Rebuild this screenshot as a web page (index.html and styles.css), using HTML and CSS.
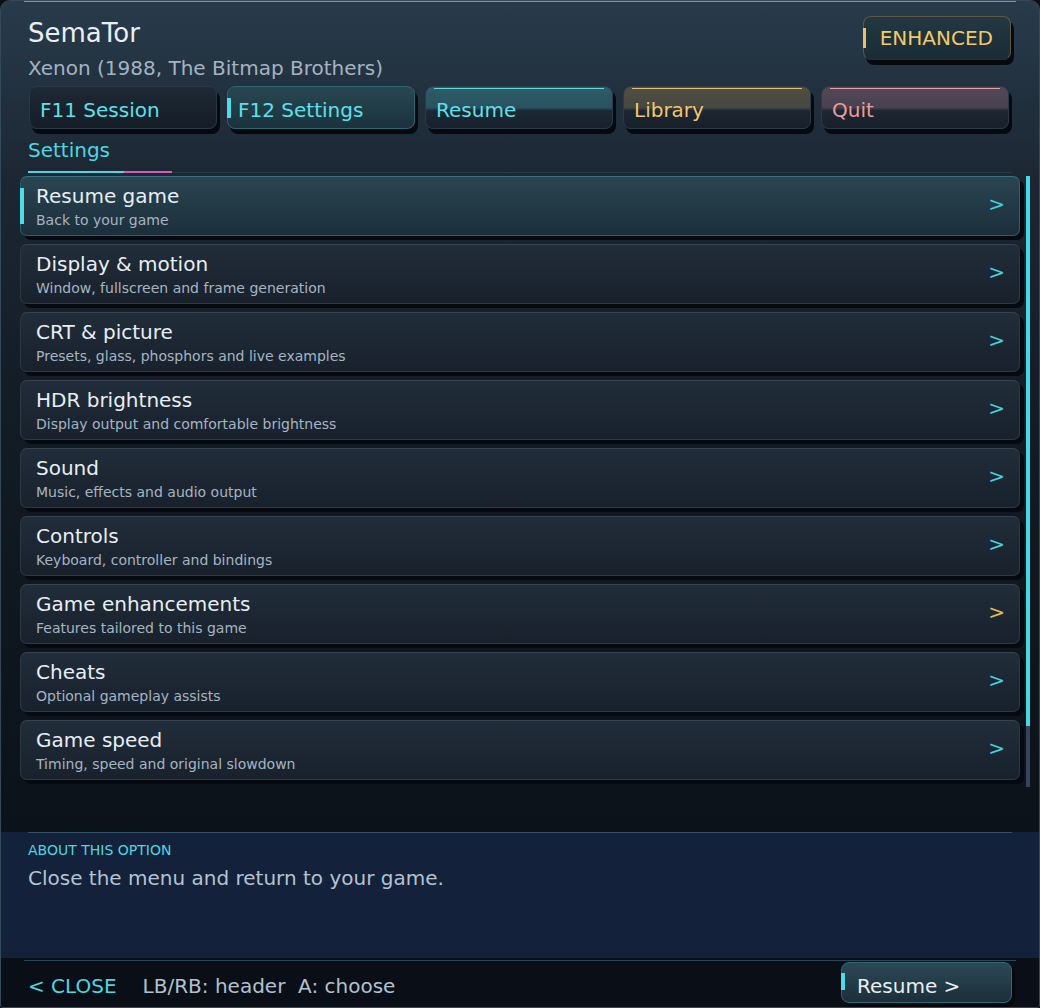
FILE: index.html
```html
<!DOCTYPE html>
<html>
<head>
<meta charset="UTF-8">
<link rel="stylesheet" href="styles.css">
</head>
<body>
<div class="window">
  <div class="top-line"></div>

  <header class="head">
    <div class="head-top">
      <div>
        <h1 class="title">SemaTor</h1>
        <div class="sub">Xenon (1988, The Bitmap Brothers)</div>
      </div>
      <div class="badge">ENHANCED</div>
    </div>

    <nav class="tabs">
      <div class="tab tab-plain">F11 Session</div>
      <div class="tab tab-active">F12 Settings</div>
      <div class="tab tab-resume">Resume</div>
      <div class="tab tab-library">Library</div>
      <div class="tab tab-quit">Quit</div>
    </nav>

    <div class="section">Settings</div>
    <div class="rule"><span class="rule-cyan"></span><span class="rule-pink"></span></div>
  </header>

  <div class="list-wrap">
    <ul class="list">
      <li class="item selected">
        <div class="item-text"><div class="item-title">Resume game</div><div class="item-sub">Back to your game</div></div>
        <span class="chev">&gt;</span>
      </li>
      <li class="item">
        <div class="item-text"><div class="item-title">Display &amp; motion</div><div class="item-sub">Window, fullscreen and frame generation</div></div>
        <span class="chev">&gt;</span>
      </li>
      <li class="item">
        <div class="item-text"><div class="item-title">CRT &amp; picture</div><div class="item-sub">Presets, glass, phosphors and live examples</div></div>
        <span class="chev">&gt;</span>
      </li>
      <li class="item">
        <div class="item-text"><div class="item-title">HDR brightness</div><div class="item-sub">Display output and comfortable brightness</div></div>
        <span class="chev">&gt;</span>
      </li>
      <li class="item">
        <div class="item-text"><div class="item-title">Sound</div><div class="item-sub">Music, effects and audio output</div></div>
        <span class="chev">&gt;</span>
      </li>
      <li class="item">
        <div class="item-text"><div class="item-title">Controls</div><div class="item-sub">Keyboard, controller and bindings</div></div>
        <span class="chev">&gt;</span>
      </li>
      <li class="item">
        <div class="item-text"><div class="item-title">Game enhancements</div><div class="item-sub">Features tailored to this game</div></div>
        <span class="chev chev-gold">&gt;</span>
      </li>
      <li class="item">
        <div class="item-text"><div class="item-title">Cheats</div><div class="item-sub">Optional gameplay assists</div></div>
        <span class="chev">&gt;</span>
      </li>
      <li class="item">
        <div class="item-text"><div class="item-title">Game speed</div><div class="item-sub">Timing, speed and original slowdown</div></div>
        <span class="chev">&gt;</span>
      </li>
    </ul>
    <div class="scroll"><div class="thumb"></div></div>
  </div>

  <section class="about">
    <div class="about-inner">
      <div class="about-label">ABOUT THIS OPTION</div>
      <div class="about-text">Close the menu and return to your game.</div>
    </div>
  </section>

  <footer class="foot">
    <div class="foot-inner">
      <div class="hints">
        <span class="close">&lt; CLOSE</span>
        <span class="keys">LB/RB: header  A: choose</span>
      </div>
      <div class="resume-btn">Resume &gt;</div>
    </div>
  </footer>
</div>
</body>
</html>
```

FILE: styles.css
```css
body {
  margin: 0;
  background: #0b1016;
  font-family: "DejaVu Sans", "Noto Sans", sans-serif;
}

/* Outer window */
.window {
  width: 1040px;
  height: 1008px;
  box-sizing: border-box;
  border: 1px solid #34495a;
  border-radius: 10px 10px 3px 3px;
  background: linear-gradient(180deg, #283b4b 0px, #1c2733 175px, #121a23 450px, #0c1219 830px);
  display: flex;
  flex-direction: column;
  overflow: hidden;
}

.top-line {
  height: 1px;
  margin: 0 23px;
  background: #5aa6b4;
  flex: none;
}

/* Header */
.head {
  padding: 14px 27px 0;
  flex: none;
}

.head-top {
  display: flex;
  justify-content: space-between;
  align-items: flex-start;
}

.title {
  margin: 2px 0 0;
  font-size: 26px;
  line-height: 30px;
  font-weight: normal;
  color: #e9eff4;
}

.sub {
  margin-top: 8px;
  font-size: 20px;
  line-height: 24px;
  color: #a4b3c1;
}

.badge {
  position: relative;
  margin-right: 1px;
  padding: 9px 17px 9px 16px;
  border: 1px solid #5f5840;
  border-bottom-color: #22323d;
  border-radius: 8px;
  background: linear-gradient(#233842, #1a2c36);
  box-shadow: 3px 5px 0 #060a0f;
  color: #f2c96b;
  font-size: 20px;
  line-height: 24px;
}

.badge::before {
  content: "";
  position: absolute;
  left: -1px;
  top: 11px;
  width: 3px;
  height: 20px;
  background: #f0c060;
}

/* Header tabs */
.tabs {
  display: flex;
  gap: 10px;
  margin: 6px 0 0 1px;
}

.tab {
  position: relative;
  width: 188px;
  height: 43px;
  box-sizing: border-box;
  padding: 11px 10px 0;
  border: 1px solid #2a3846;
  border-radius: 8px;
  box-shadow: 3px 5px 0 #060a0f;
  font-size: 20px;
  line-height: 24px;
  color: #5fe0e8;
}

.tab-plain {
  background: linear-gradient(#1e2935, #151d27);
}

.tab-active {
  border-color: #2e6670;
  background: linear-gradient(#284752, #1b323e);
}

.tab-active::before {
  content: "";
  position: absolute;
  left: -1px;
  top: 11px;
  width: 4px;
  height: 20px;
  background: #4fdce6;
}

.tab-resume,
.tab-library,
.tab-quit {
  border-color: #2c3a48;
}

.tab-resume::after,
.tab-library::after,
.tab-quit::after {
  content: "";
  position: absolute;
  top: 1px;
  left: 8px;
  right: 8px;
  height: 1px;
}

.tab-resume {
  background: linear-gradient(#2e5c68 0%, #295260 50%, #1c2935 58%, #17202b 100%);
}
.tab-resume::after { background: #5fd8e0; }

.tab-library {
  color: #f0c76a;
  background: linear-gradient(#504f44 0%, #464741 50%, #1d2632 58%, #171f2a 100%);
}
.tab-library::after { background: #e0c070; }

.tab-quit {
  color: #eb9d9a;
  background: linear-gradient(#534858 0%, #494150 50%, #1d2632 58%, #171f2a 100%);
}
.tab-quit::after { background: #e8a0a0; }

.section {
  margin-top: 9px;
  font-size: 20px;
  line-height: 24px;
  color: #4fd6e0;
}

.rule {
  display: flex;
  height: 2px;
  margin-top: 9px;
  background: linear-gradient(transparent 50%, #2a3b4c 50%);
}

.rule-cyan {
  width: 96px;
  background: #4fd6e0;
}

.rule-pink {
  width: 48px;
  background: #d45cb8;
}

/* Option list */
.list-wrap {
  display: flex;
  gap: 6px;
  height: 656px;
  box-sizing: border-box;
  margin-top: 3px;
  padding: 0 9px 0 19px;
  flex: none;
}

.list {
  list-style: none;
  margin: 0;
  padding: 0;
  width: 1000px;
  display: flex;
  flex-direction: column;
  gap: 8px;
}

.item {
  position: relative;
  height: 60px;
  box-sizing: border-box;
  display: flex;
  justify-content: space-between;
  align-items: flex-start;
  padding: 7px 14px 0 15px;
  border: 1px solid #2b3846;
  border-top-color: #36434f;
  border-radius: 7px;
  background: linear-gradient(#212d3a, #18212c);
  box-shadow: 4px 4px 0 #060a10;
}

.item.selected {
  border-color: #2b5e6a;
  border-top-color: #34737f;
  background: linear-gradient(#2a4551, #1b2f3b);
}

.item.selected::before {
  content: "";
  position: absolute;
  left: -1px;
  top: 11px;
  width: 4px;
  height: 36px;
  background: #4fdce6;
}

.item-title {
  font-size: 20px;
  line-height: 24px;
  color: #e7eef4;
}

.item-sub {
  margin-top: 3px;
  font-size: 14px;
  line-height: 18px;
  color: #a6b4c2;
}

.chev {
  margin-top: 8px;
  font-size: 20px;
  line-height: 24px;
  color: #43d0dc;
}

.chev-gold {
  color: #e6b955;
}

.scroll {
  width: 4px;
  height: 611px;
  background: #34455a;
  flex: none;
}

.thumb {
  height: 550px;
  background: #46d8e4;
}

/* Description panel */
.about {
  height: 126px;
  box-sizing: border-box;
  padding: 0 27px;
  background: #13213a;
  flex: none;
}

.about-inner {
  border-top: 1px solid #33506a;
  padding-top: 9px;
}

.about-label {
  font-size: 14px;
  line-height: 17px;
  color: #4fd6e0;
}

.about-text {
  margin-top: 7px;
  font-size: 20px;
  line-height: 24px;
  color: #b4c3d1;
}

/* Footer */
.foot {
  flex: 1;
  padding: 2px 23px 0;
  background: #0a0f17;
}

.foot-inner {
  display: flex;
  justify-content: space-between;
  align-items: flex-start;
  border-top: 1px solid #2c465c;
}

.hints {
  display: flex;
  gap: 26px;
  margin-top: 13px;
  padding-left: 4px;
  font-size: 20px;
  line-height: 24px;
}

.close {
  color: #4fd6e0;
}

.keys {
  white-space: pre;
  color: #b2c1cf;
}

.resume-btn {
  position: relative;
  width: 171px;
  height: 41px;
  box-sizing: border-box;
  margin: 1px 4px 0 0;
  padding: 11px 0 0 15px;
  border: 1px solid #2f6a74;
  border-radius: 8px;
  background: linear-gradient(#2b4955, #1b2f3a);
  box-shadow: 3px 4px 0 #05080c;
  color: #e8eef3;
  font-size: 20px;
  line-height: 24px;
}

.resume-btn::before {
  content: "";
  position: absolute;
  left: -1px;
  top: 10px;
  width: 4px;
  height: 17px;
  background: #4fdce6;
}
```
